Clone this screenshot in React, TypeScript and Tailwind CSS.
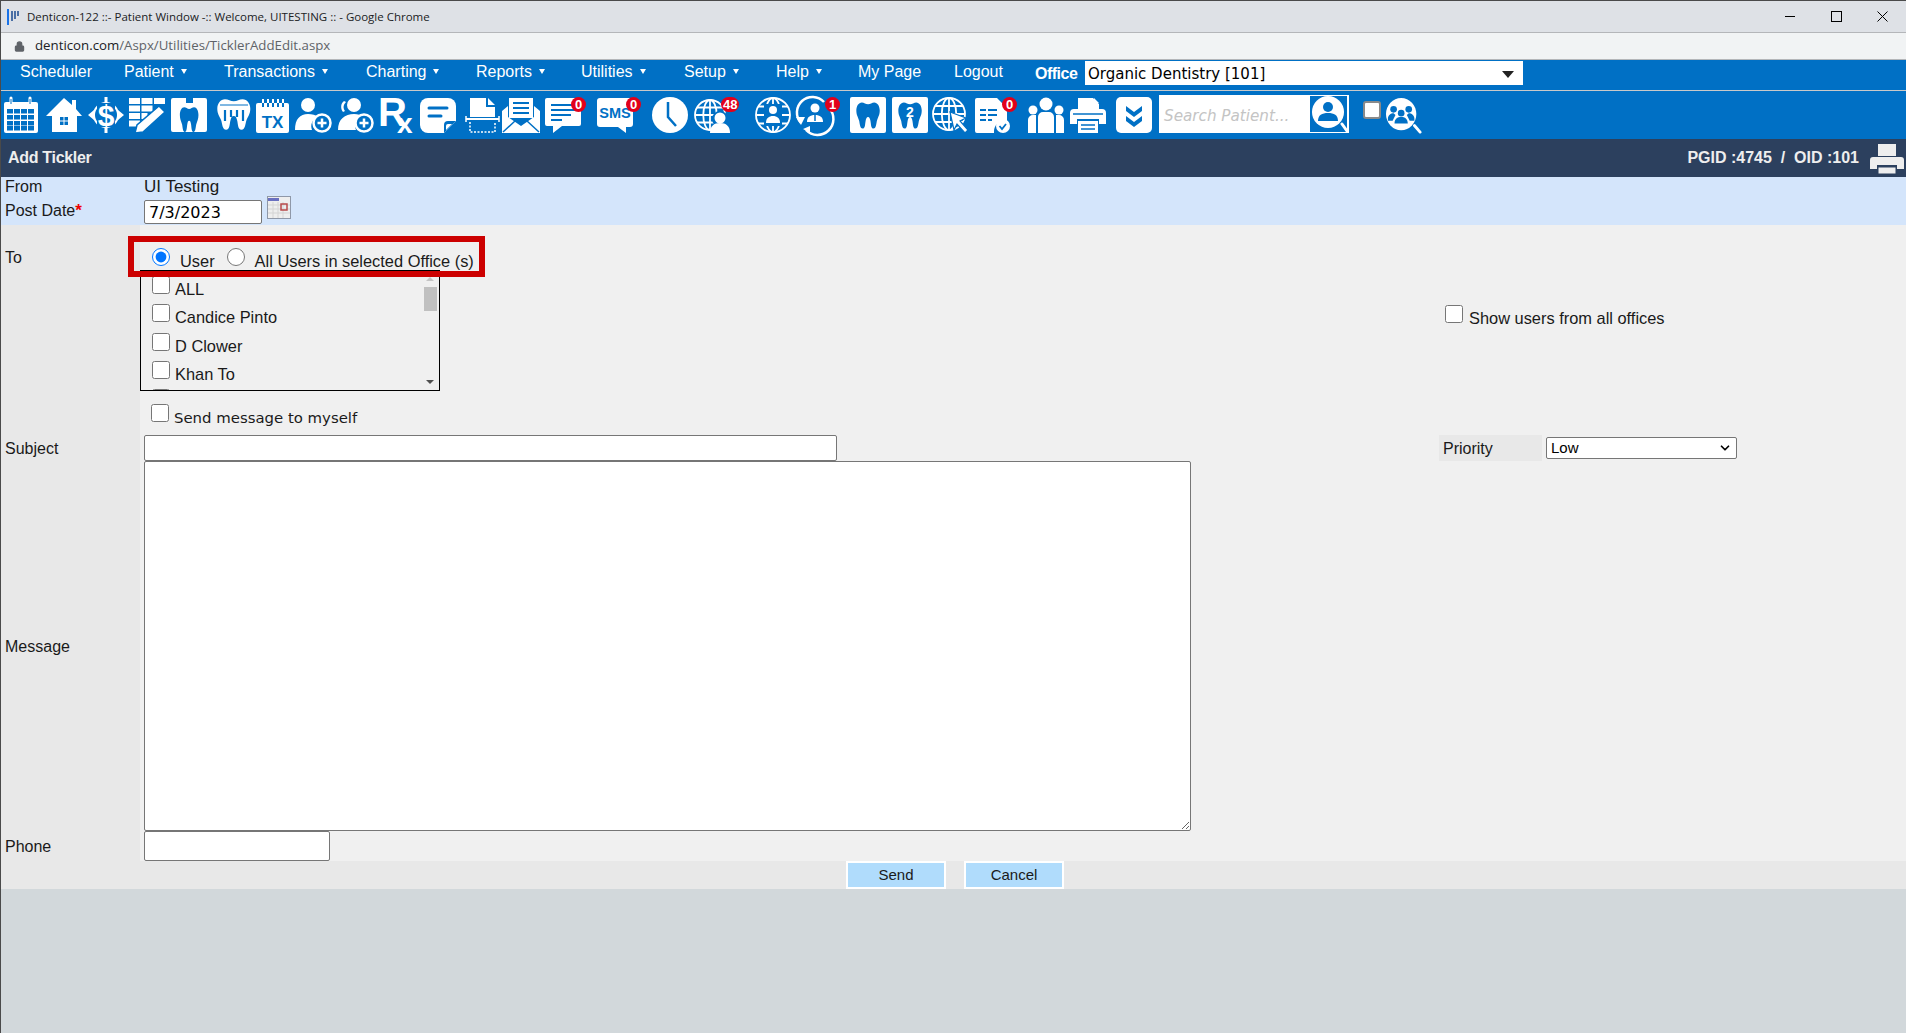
import React from 'react'
import { ChevronDown, Lock } from 'lucide-react'

const BLUE = '#0070c5'

const tooth = 'M10 5c3 0 5 2 8 2s5-2 8-2c4 0 7 4 7 9 0 5-2 7-3.500 11-1 3-1 9-4.500 9s-3-5-4-9c-.5-2-1-4-3-4s-2.500 2-3 4c-1 4-.5 9-4 9s-3.500-6-4.500-9C5 21 3 19 3 14c0-5 3-9 7-9z'

function Globe({ cx = 16, cy = 18, r = 15 }: { cx?: number; cy?: number; r?: number }) {
  return (
    <g fill="none" stroke="#fff" strokeWidth="1.8">
      <circle cx={cx} cy={cy} r={r} />
      <ellipse cx={cx} cy={cy} rx={r * 0.45} ry={r} />
      <path d={`M${cx} ${cy - r}V${cy + r}M${cx - r} ${cy}H${cx + r}M${cx - r + 2} ${cy - r * 0.5}H${cx + r - 2}M${cx - r + 2} ${cy + r * 0.5}H${cx + r - 2}`} />
    </g>
  )
}

function UserPlus({ two }: { two?: boolean }) {
  return (
    <>
      {two && <path d="M7 4c-3 2-4 7-1 11l2-1c-2-3-2-6 1-9z" fill="#fff" />}
      <circle cx={two ? 17 : 13} cy="8" r="7" fill="#fff" />
      <path d={two ? 'M1 33c0-11 7-16 16-16 4 0 7 1 9 3-7 2-9 8-7 13z' : 'M0 33c0-11 5-16 13-16 4 0 8 1 10 3-6 2-8 8-6 13z'} fill="#fff" />
      <circle cx="27" cy="26" r="8.500" fill={BLUE} stroke="#fff" strokeWidth="2.500" />
      <path d="M27 21.500v9M22.500 26h9" stroke="#fff" strokeWidth="2.500" />
    </>
  )
}

const iconArt: Record<string, React.ReactNode> = {
  calendar: (
    <>
      <path d="M3 5h30a2 2 0 0 1 2 2v27a2 2 0 0 1-2 2H3a2 2 0 0 1-2-2V7a2 2 0 0 1 2-2z" fill="#fff" />
      <path d="M8 1v7M27 1v7" stroke="#fff" strokeWidth="3" strokeLinecap="round" />
      <path d="M8 2v5M27 2v5" stroke={BLUE} strokeWidth="1" />
      {[12, 18, 24, 29].map((y) =>
        [4, 11, 18, 25].map((x) => <rect key={`${x}-${y}`} x={x} y={y} width="6" height="4.500" fill={BLUE} />)
      )}
    </>
  ),
  home: (
    <>
      <path d="M18 1 26 8V3h4v9l6 7h-5v16H6V19H0z" fill="#fff" />
      <path d="M14 20h3.500v3.500H14zM18.500 20H22v3.500h-3.500zM14 24.500h3.500V28H14zM18.500 24.500H22V28h-3.500z" fill={BLUE} />
    </>
  ),
  dollar: (
    <>
      <circle cx="18" cy="18" r="12" fill="none" stroke="#fff" strokeWidth="2" />
      <path d="M18 0v8M18 28v8" stroke="#fff" strokeWidth="3" />
      <path d="M0 18l6-5v10zM36 18l-6-5v10z" fill="#fff" />
      <rect x="9" y="6" width="18" height="24" fill={BLUE} />
      <text x="18" y="29" textAnchor="middle" fontFamily="'Liberation Sans', sans-serif" fontWeight="700" fontSize="30" fill="#fff">$</text>
    </>
  ),
  table: (
    <>
      {[1, 8.5, 16, 23.500].map((y, row) => (
        <g key={y} fill="#fff">
          <rect x="0" y={y} width="11" height="6" />
          <rect x="12.500" y={y} width={row < 2 ? 11 : 6} height="6" />
          {row === 0 && <rect x="25" y={y} width="11" height="6" />}
        </g>
      ))}
      <path d="M30 9 36 15 14 35l-8 1 2-8z" fill="#fff" stroke={BLUE} strokeWidth="1.500" />
    </>
  ),
  toothXray: (
    <>
      <path d="M2 1h13v5h7V1h12a2 2 0 0 1 2 2v30a2 2 0 0 1-2 2H2a2 2 0 0 1-2-2V3a2 2 0 0 1 2-2z" fill="#fff" />
      <g transform="translate(7 6) scale(.62 .85)"><path d={tooth} fill={BLUE} /></g>
    </>
  ),
  toothRoots: (
    <>
      <path d={tooth} fill="#fff" transform="translate(-2 -3) scale(1.100 1.050)" />
      <path d="M4 8h28" stroke={BLUE} strokeWidth="1" />
      <path d="M9 13v11M15 13v7M21 13v7M27 13v11" stroke={BLUE} strokeWidth="2.200" />
    </>
  ),
  tx: (
    <>
      <rect x="1" y="6" width="33" height="30" rx="2" fill="#fff" />
      <path d="M8 2v8M13 2v8M18 2v8M23 2v8M28 2v8" stroke="#fff" strokeWidth="2" />
      <path d="M8 6v4M13 6v4M18 6v4M23 6v4M28 6v4" stroke={BLUE} strokeWidth="2" />
      <text x="17.500" y="31" textAnchor="middle" fontFamily="'Liberation Sans', sans-serif" fontWeight="700" fontSize="17" fill={BLUE}>TX</text>
    </>
  ),
  userPlus: <UserPlus />,
  usersPlus: <UserPlus two />,
  rx: (
    <text x="-1" y="29" fontFamily="'Liberation Sans', sans-serif" fontWeight="700" fontSize="40" fill="#fff">
      R<tspan dx="-10" dy="7" fontSize="28">x</tspan>
    </text>
  ),
  note: (
    <>
      <path d="M8 1h20a8 8 0 0 1 8 8v15L24 36H8a8 8 0 0 1-8-8V9a8 8 0 0 1 8-8z" fill="#fff" />
      <path d="M9 11h18M9 19h12" stroke={BLUE} strokeWidth="3" strokeLinecap="round" />
      <path d="M24 36V28a4 4 0 0 1 4-4h8z" fill={BLUE} />
      <path d="M26 33v-4a2 2 0 0 1 2-2h4z" fill="#fff" />
    </>
  ),
  scan: (
    <>
      <path d="M5 1h16v9h9v10H5zM23 1l7 7h-7z" fill="#fff" />
      <path d="M1 22h33" stroke="#fff" strokeWidth="2" />
      <path d="M1 19v6M34 19v6" stroke="#fff" strokeWidth="1.500" />
      <path d="M5 25v10h25V25" fill="none" stroke="#fff" strokeWidth="1.500" strokeDasharray="2 1.500" />
    </>
  ),
  envelope: (
    <>
      <path d="M7 1h24v20H7z" fill="#fff" />
      <path d="M11 6h16M11 11h16M11 16h16" stroke={BLUE} strokeWidth="2" />
      <path d="M0 14l6-5v11l13 9 13-9V9l6 5v22H0z" fill="#fff" />
      <path d="M1 35 13 24M37 35 25 24" stroke={BLUE} strokeWidth="1.500" />
    </>
  ),
  chat: (
    <>
      <path d="M2 1h32a2 2 0 0 1 2 2v24a2 2 0 0 1-2 2H17l-9 7v-7H2a2 2 0 0 1-2-2V3a2 2 0 0 1 2-2z" fill="#fff" />
      <path d="M6 8h24M6 13h24M6 18h20M6 23h11" stroke={BLUE} strokeWidth="2.200" />
    </>
  ),
  sms: (
    <>
      <path d="M3 1h30a3 3 0 0 1 3 3v23a3 3 0 0 1-3 3h-4v6l-8-6H3a3 3 0 0 1-3-3V4a3 3 0 0 1 3-3z" fill="#fff" />
      <text x="18" y="21" textAnchor="middle" fontFamily="'Liberation Sans', sans-serif" fontWeight="700" fontSize="14.500" fill={BLUE}>SMS</text>
    </>
  ),
  clock: (
    <>
      <ellipse cx="18" cy="18" rx="18" ry="18" fill="#fff" />
      <path d="M16 5v15l8 9" fill="none" stroke={BLUE} strokeWidth="2.500" />
    </>
  ),
  globeUser: (
    <>
      <Globe />
      <circle cx="26" cy="22" r="8" fill={BLUE} />
      <circle cx="26" cy="21" r="5.500" fill="#fff" />
      <path d="M16 36c0-7 4-10 10-10s10 3 10 10z" fill="#fff" />
    </>
  ),
  globePerson: (
    <>
      <Globe cx={18} cy={18} r={17} />
      <rect x="9" y="7" width="18" height="22" fill={BLUE} />
      <circle cx="18" cy="13" r="4" fill="#fff" />
      <path d="M11 26c0-5 3-7 7-7s7 2 7 7z" fill="#fff" />
    </>
  ),
  sync: (
    <>
      <path d="M5 26A15 15 0 0 1 28 5" fill="none" stroke="#fff" strokeWidth="2.500" />
      <path d="M33 11a15 15 0 0 1-23 22" fill="none" stroke="#fff" strokeWidth="2.500" />
      <path d="M0 20h9l-4 8zM14 29v7l-7-4z" fill="#fff" />
      <circle cx="19" cy="11" r="4.500" fill="#fff" />
      <path d="M11 25c0-5 3-7 8-7s8 2 8 7z" fill="#fff" />
      <path d="M19 18v6" stroke={BLUE} strokeWidth="1.500" />
    </>
  ),
  toothBox: (
    <>
      <rect width="36" height="36" rx="2" fill="#fff" />
      <g transform="translate(4 1) scale(.78 .9)"><path d={tooth} fill={BLUE} /></g>
    </>
  ),
  toothTwo: (
    <>
      <rect width="36" height="36" rx="2" fill="#fff" />
      <g transform="translate(4 1) scale(.78 .9)"><path d={tooth} fill={BLUE} /></g>
      <text x="18" y="20" textAnchor="middle" fontFamily="'Liberation Sans', sans-serif" fontWeight="700" fontSize="14" fill="#fff">2</text>
    </>
  ),
  globeCursor: (
    <>
      <Globe cx={17} cy={17} r={16} />
      <path d="M18 15 34 21l-6 3 8 9-3 3-8-9-3 6z" fill="#fff" stroke={BLUE} strokeWidth="1.200" />
    </>
  ),
  docCheck: (
    <>
      <path d="M2 1h20l10 10v14a10 10 0 0 0-13 11H2a2 2 0 0 1-2-2V3a2 2 0 0 1 2-2z" fill="#fff" />
      <path d="M5 13h6M13 13h9M5 18h6M13 18h9M5 23h6M13 23h4" stroke={BLUE} strokeWidth="2" />
      <circle cx="28" cy="29" r="7" fill="#fff" />
      <path d="M24.500 29l2.500 3 4-5" fill="none" stroke={BLUE} strokeWidth="1.800" />
    </>
  ),
  group: (
    <>
      <circle cx="18" cy="7" r="6.500" fill="#fff" />
      <circle cx="5" cy="13" r="4.500" fill="#fff" />
      <circle cx="31" cy="13" r="4.500" fill="#fff" />
      <path d="M0 36V23a5 5 0 0 1 5-5h3v18zM36 36V23a5 5 0 0 0-5-5h-3v18zM10 36V20a5 5 0 0 1 5-5h6a5 5 0 0 1 5 5v16z" fill="#fff" />
    </>
  ),
  printer: (
    <>
      <path d="M8 1h15l6 6v7H8zM24 1l5 5h-5z" fill="#fff" />
      <path d="M4 12h28a4 4 0 0 1 4 4v11H29v-5H7v5H0V16a4 4 0 0 1 4-4z" fill="#fff" />
      <path d="M8 24h20v12H8z" fill="#fff" />
      <path d="M11 28h14M11 32h14" stroke={BLUE} strokeWidth="1.500" />
      <path d="M3 17h30" stroke={BLUE} strokeWidth="1.500" />
    </>
  ),
  chevrons: (
    <>
      <rect width="36" height="36" rx="5" fill="#fff" />
      <path d="M10 9v5l8 6 8-6V9l-8 6zM10 19v5l8 6 8-6v-5l-8 6z" fill={BLUE} />
    </>
  ),
}

const toolbar = [
  { art: 'calendar', cell: 'w-[43px]' },
  { art: 'home', cell: 'w-[42px]' },
  { art: 'dollar', cell: 'w-[41px]' },
  { art: 'table', cell: 'w-[42px]' },
  { art: 'toothXray', cell: 'w-[45px]' },
  { art: 'toothRoots', cell: 'w-[39px]' },
  { art: 'tx', cell: 'w-[40px]' },
  { art: 'userPlus', cell: 'w-[42px]' },
  { art: 'usersPlus', cell: 'w-[42px]' },
  { art: 'rx', cell: 'w-[41px]' },
  { art: 'note', cell: 'w-[45px]' },
  { art: 'scan', cell: 'w-[37px]' },
  { art: 'envelope', cell: 'w-[43px]' },
  { art: 'chat', cell: 'w-[52px]', badge: '0', badgePos: 'left-[26px]' },
  { art: 'sms', cell: 'w-[55px]', badge: '0', badgePos: 'left-[29px]' },
  { art: 'clock', cell: 'w-[42px]' },
  { art: 'globeUser', cell: 'w-[61px]', badge: '48', badgePos: 'left-[27px]' },
  { art: 'globePerson', cell: 'w-[41px]' },
  { art: 'sync', cell: 'w-[54px]', badge: '1', badgePos: 'left-[29px]' },
  { art: 'toothBox', cell: 'w-[42px]' },
  { art: 'toothTwo', cell: 'w-[40px]' },
  { art: 'globeCursor', cell: 'w-[43px]' },
  { art: 'docCheck', cell: 'w-[53px]', badge: '0', badgePos: 'left-[27px]' },
  { art: 'group', cell: 'w-[42px]' },
  { art: 'printer', cell: 'w-[46px]' },
  { art: 'chevrons', cell: 'w-[43px]' },
]

const navItems = [
  { label: 'Scheduler', cell: 'w-[104px]' },
  { label: 'Patient', cell: 'w-[100px]', caret: true },
  { label: 'Transactions', cell: 'w-[142px]', caret: true },
  { label: 'Charting', cell: 'w-[110px]', caret: true },
  { label: 'Reports', cell: 'w-[105px]', caret: true },
  { label: 'Utilities', cell: 'w-[103px]', caret: true },
  { label: 'Setup', cell: 'w-[92px]', caret: true },
  { label: 'Help', cell: 'w-[82px]', caret: true },
  { label: 'My Page', cell: 'w-[96px]' },
  { label: 'Logout', cell: 'w-[81px]' },
]

const users = ['ALL', 'Candice Pinto', 'D Clower', 'Khan To']

function ChromeBars() {
  return (
    <>
      <div className="flex h-[31px] items-center bg-[#dee1e6] font-['Open_Sans',sans-serif] text-[11.500px] text-[#202124]">
        <svg width="14" height="16" viewBox="0 0 14 16" className="ml-[6px]">
          <path d="M1 0v16" stroke="#1a73e8" strokeWidth="2" />
          <path d="M5 2v10M8 2v8M11 2v5" stroke="#4a6fa5" strokeWidth="2" />
        </svg>
        <span className="ml-[6px]">Denticon-122 ::- Patient Window -:: Welcome, UITESTING :: - Google Chrome</span>
        <div className="ml-auto flex items-center">
          <span className="h-px w-[10px] bg-black" />
          <span className="ml-[36px] h-[11px] w-[11px] border border-black" />
          <svg width="11" height="11" viewBox="0 0 11 11" className="ml-[35px] mr-[18px]">
            <path d="M.5.5l10 10M10.500.5l-10 10" stroke="#000" strokeWidth="1" />
          </svg>
        </div>
      </div>
      <div className="flex h-[28px] items-center border-y border-[#b4b6b9] bg-[#f1f3f4] font-['Open_Sans',sans-serif] text-[13.250px]">
        <Lock className="ml-[13px] h-[11px] w-[11px] fill-[#5f6368] text-[#5f6368]" strokeWidth={2.500} />
        <span className="ml-[10px] text-[#202124]">denticon.com</span>
        <span className="text-[#5f6368]">/Aspx/Utilities/TicklerAddEdit.aspx</span>
      </div>
    </>
  )
}

function NavBar() {
  return (
    <div className="flex h-[31px] items-start border-b border-[#c9c9c9] bg-[#0070c5] pl-[19px] font-['Liberation_Sans',sans-serif] text-[16px] text-white">
      {navItems.map((item) => (
        <div key={item.label} className={`${item.cell} flex h-[23px] items-center`}>
          <span>{item.label}</span>
          {item.caret && <span className="ml-[7px] border-x-[3px] border-t-[5px] border-x-transparent border-t-white" />}
        </div>
      ))}
      <span className="mt-[2px] w-[50px] text-[16px] font-bold tracking-[-0.5px]">Office</span>
      <div className="mt-px flex h-[24px] w-[438px] items-center justify-between bg-white pl-[3px] pr-[9px] pt-[2px] font-['DejaVu_Sans',sans-serif] text-[15px] text-black">
        <span>Organic Dentistry [101]</span>
        <span className="border-x-[6px] border-t-[7px] border-x-transparent border-t-[#222]" />
      </div>
    </div>
  )
}

function ToolBar() {
  return (
    <div className="flex h-[48px] items-start bg-[#0070c5] pl-[2px] pt-[6px]">
      {toolbar.map((icon) => (
        <div key={icon.art} className={`${icon.cell} relative shrink-0`}>
          <svg width="36" height="36" viewBox="0 0 36 36" className="block overflow-visible">{iconArt[icon.art]}</svg>
          {icon.badge && (
            <span className={`${icon.badgePos} absolute top-0 flex h-[15px] min-w-[15px] items-center justify-center rounded-full bg-[#e2001a] px-[2px] font-['Liberation_Sans',sans-serif] text-[13px] font-bold leading-none text-white`}>
              {icon.badge}
            </span>
          )}
        </div>
      ))}
      <div className="-mt-[2px] flex h-[38px] w-[190px] items-center justify-between bg-white pl-[5px] pr-[2px]">
        <span className="pt-[4px] font-['DejaVu_Sans',sans-serif] text-[15.200px] italic text-[#c4c4c4]">Search Patient...</span>
        <div className="flex h-[36px] w-[37px] items-center justify-center bg-[#0070c5]">
          <svg width="36" height="36" viewBox="0 0 36 36">
            <path d="M31 28 36 35" stroke="#fff" strokeWidth="3" strokeLinecap="round" />
            <ellipse cx="17" cy="16" rx="16" ry="16" fill="#fff" />
            <circle cx="17" cy="11" r="5" fill={BLUE} />
            <path d="M7 25c0-6 4-8 10-8s10 2 10 8z" fill={BLUE} />
          </svg>
        </div>
      </div>
      <input type="checkbox" readOnly className="ml-[14px] mt-[4px] h-[18px] w-[18px] appearance-none rounded-[3px] border-2 border-[#8a8a8a] bg-white" />
      <svg width="36" height="36" viewBox="0 0 38 38" className="ml-[5px] mt-px">
        <path d="M30 29 36 36" stroke="#fff" strokeWidth="3" strokeLinecap="round" />
        <ellipse cx="16" cy="17" rx="16" ry="17" fill="#fff" />
        <g fill={BLUE}>
          <circle cx="8" cy="12" r="3.500" />
          <circle cx="24" cy="12" r="3.500" />
          <circle cx="16" cy="16" r="3.500" />
          <path d="M2 22c0-4 3-6 6-6l2 2-3 6H2zM30 22c0-4-3-6-6-6l-2 2 3 6h5zM9 27c0-5 3-7 7-7s7 2 7 7z" />
        </g>
      </svg>
    </div>
  )
}

function PageHeader() {
  return (
    <div className="flex h-[38px] items-center bg-[#2c405e] pl-[7px] pr-[2px] font-['Liberation_Sans',sans-serif] text-[16px] font-bold text-[#eeeeee]">
      <span className="tracking-[-0.3px]">Add Tickler</span>
      <span className="ml-auto mr-[11px] whitespace-pre">PGID :4745  /  OID :101</span>
      <svg width="34" height="31" viewBox="0 0 34 31">
        <path d="M8 1h18v12H8z" fill="#eee" />
        <path d="M3 14h28a3 3 0 0 1 3 3v9h-7v-4H7v4H0v-9a3 3 0 0 1 3-3z" fill="#eee" />
        <path d="M8 24h18v7H8z" fill="#eee" stroke="#2c405e" strokeWidth="1" />
      </svg>
    </div>
  )
}

function Scrollbar() {
  return (
    <div className="flex w-[16px] flex-col items-center pt-[6px] pb-[6px] pr-[2px]">
      <span className="border-x-[4px] border-b-[4px] border-x-transparent border-b-[#c4c4c4]" />
      <span className="mt-[6px] h-[24px] w-[13px] bg-[#c0c0c0]" />
      <span className="mt-auto border-x-[4px] border-t-[4px] border-x-transparent border-t-[#505050]" />
    </div>
  )
}

function Label({ children, cell }: { children: React.ReactNode; cell: string }) {
  return <div className={`${cell} w-[139px] shrink-0 bg-[#e8e8e8] pl-[4px]`}>{children}</div>
}

function TicklerForm() {
  return (
    <div className="flex flex-col bg-[#f0f0f0] font-['Liberation_Sans',sans-serif] text-[16px] leading-[18px] text-[#1a1a1a]">
      <div className="h-[48px] bg-[#d4e5fb] pl-[4px]">
        <div className="flex h-[21px] items-start pt-px">
          <span className="w-[139px]">From</span>
          <span className="text-[17px]">UI Testing</span>
        </div>
        <div className="flex h-[27px] items-start">
          <span className="mt-[4px] w-[139px]">
            Post Date<span className="align-top text-[17px] font-bold text-[#ee0000]">*</span>
          </span>
          <input
            readOnly
            value="7/3/2023"
            className="mt-[2px] h-[24px] w-[118px] rounded-[2px] border border-[#767676] bg-white pl-[4px] pt-px font-['DejaVu_Sans',sans-serif] text-[16px] text-black"
          />
          <svg width="24" height="23" viewBox="0 0 24 23" className="-mt-[2px] ml-[5px]">
            <rect width="24" height="23" fill="#8f98a8" />
            <rect x="1" y="1" width="22" height="21" fill="#eeeeee" />
            <rect x="1" y="2" width="11" height="3" fill="#6a70c0" />
            <path d="M1 9h22M1 13h22M1 17h22M6 6v16M11 6v16M16 6v16" stroke="#d4d4d4" strokeWidth="1" />
            <rect x="14" y="8" width="6" height="6" fill="none" stroke="#b84a4a" strokeWidth="1.500" />
          </svg>
        </div>
      </div>

      <div className="relative flex h-[210px]">
        <Label cell="pt-[24px]">To</Label>
        <div className="flex-1">
          <div className="flex h-[45px] items-start pl-[12px] pt-[23px] text-[16.400px]">
            <input type="radio" name="scope" defaultChecked className="h-[18px] w-[18px]" />
            <span className="ml-[10px] mt-[4px]">User</span>
            <input type="radio" name="scope" className="ml-[12px] h-[18px] w-[18px]" />
            <span className="ml-[10px] mt-[4px]">All Users in selected Office (s)</span>
          </div>
          <div className="flex h-[121px] w-[300px] overflow-hidden border border-black">
            <div className="flex-1 pl-[11px] pt-[5px] text-[16.400px]">
              {users.map((name) => (
                <div key={name} className="flex h-[28.300px] items-start">
                  <input type="checkbox" className="h-[18px] w-[18px] shrink-0" />
                  <span className="ml-[5px] mt-[4px]">{name}</span>
                </div>
              ))}
              <input type="checkbox" className="block h-[18px] w-[18px]" />
            </div>
            <Scrollbar />
          </div>
          <div className="flex items-start pl-[11px] pt-[13px]">
            <input type="checkbox" className="h-[18px] w-[18px]" />
            <span className="ml-[5px] mt-[5px] font-['DejaVu_Sans',sans-serif] text-[14.900px]">Send message to myself</span>
          </div>
        </div>
        <div className="flex w-[461px] items-start pt-[80px] text-[16.400px]">
          <input type="checkbox" className="h-[18px] w-[18px]" />
          <span className="ml-[6px] mt-[4px]">Show users from all offices</span>
        </div>
        <div className="pointer-events-none absolute left-[127px] top-[11px] h-[41px] w-[357px] border-[6px] border-[#cc0000]" />
      </div>

      <div className="flex h-[26px]">
        <Label cell="flex items-center pt-[2px]">Subject</Label>
        <input className="ml-[4px] h-[26px] w-[693px] rounded-[2px] border border-[#767676] bg-white" />
        <div className="ml-auto flex w-[467px] items-start">
          <span className="flex h-[26px] w-[103px] items-center bg-[#e8e8e8] pl-[4px] pt-[2px]">Priority</span>
          <div className="relative ml-[4px] mt-[2px]">
            <select className="h-[22px] w-[191px] appearance-none rounded-[2px] border border-[#767676] bg-white pl-[4px] text-[15px] text-black">
              <option>Low</option>
            </select>
            <ChevronDown className="pointer-events-none absolute right-[5px] top-[4px] h-[14px] w-[14px] text-black" strokeWidth={3} />
          </div>
        </div>
      </div>

      <div className="flex h-[370px]">
        <Label cell="flex items-center pt-[2px]">Message</Label>
        <textarea className="ml-[4px] h-[370px] w-[1047px] rounded-[2px] border border-[#767676] bg-white" />
      </div>

      <div className="flex h-[30px]">
        <Label cell="flex items-center pt-[2px]">Phone</Label>
        <input className="ml-[4px] h-[30px] w-[186px] rounded-[2px] border border-[#767676] bg-white" />
      </div>

      <div className="flex h-[28px] gap-[18px] bg-[#e8e8e8] pl-[845px]">
        <button className="h-[28px] w-[100px] border-2 border-white bg-[#b0dcfc] text-[15px]">Send</button>
        <button className="h-[28px] w-[100px] border-2 border-white bg-[#b0dcfc] text-[15px]">Cancel</button>
      </div>
    </div>
  )
}

export default function App() {
  return (
    <div className="flex h-[1033px] w-[1906px] flex-col overflow-hidden border-l border-t border-[#4a4a4a] bg-[#d2d8db]">
      <ChromeBars />
      <NavBar />
      <ToolBar />
      <PageHeader />
      <TicklerForm />
    </div>
  )
}
